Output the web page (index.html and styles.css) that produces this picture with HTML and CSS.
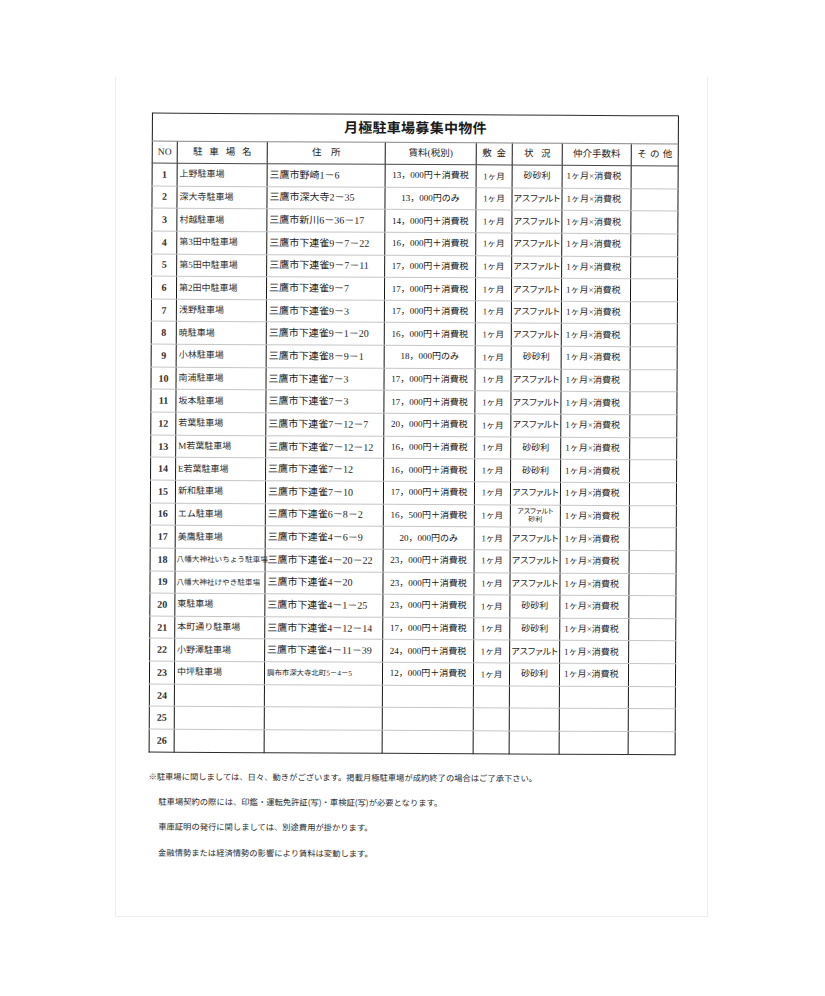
FILE: index.html
```html
<!DOCTYPE html>
<html lang="ja">
<head>
<meta charset="utf-8">
<title>月極駐車場募集中物件</title>
<link rel="stylesheet" href="styles.css">
</head>
<body>
<div class="sheet">
  <div class="content">
    <table class="list">
      <colgroup>
        <col class="c-no"><col class="c-name"><col class="c-addr"><col class="c-rent"><col class="c-dep"><col class="c-st"><col class="c-fee"><col class="c-etc">
      </colgroup>
      <thead>
        <tr class="title"><th colspan="8">月極駐車場募集中物件</th></tr>
        <tr class="head">
          <th>NO</th>
          <th><span class="sp-name">駐車場名</span></th>
          <th><span class="sp-addr">住所</span></th>
          <th>賃料(税別)</th>
          <th><span class="sp-two">敷金</span></th>
          <th><span class="sp-st">状況</span></th>
          <th class="h-fee">仲介手数料</th>
          <th><span class="sp-etc">その他</span></th>
        </tr>
      </thead>
      <tbody>
        <tr><td class="no">1</td><td class="name">上野駐車場</td><td class="addr">三鷹市野崎1－6</td><td class="rent">13，000円＋消費税</td><td class="dep">1ヶ月</td><td class="st">砂砂利</td><td class="fee">1ヶ月×消費税</td><td></td></tr>
        <tr><td class="no">2</td><td class="name">深大寺駐車場</td><td class="addr">三鷹市深大寺2－35</td><td class="rent">13，000円のみ</td><td class="dep">1ヶ月</td><td class="st">アスファルト</td><td class="fee">1ヶ月×消費税</td><td></td></tr>
        <tr><td class="no">3</td><td class="name">村越駐車場</td><td class="addr">三鷹市新川6－36－17</td><td class="rent">14，000円＋消費税</td><td class="dep">1ヶ月</td><td class="st">アスファルト</td><td class="fee">1ヶ月×消費税</td><td></td></tr>
        <tr><td class="no">4</td><td class="name">第3田中駐車場</td><td class="addr">三鷹市下連雀9－7－22</td><td class="rent">16，000円＋消費税</td><td class="dep">1ヶ月</td><td class="st">アスファルト</td><td class="fee">1ヶ月×消費税</td><td></td></tr>
        <tr><td class="no">5</td><td class="name">第5田中駐車場</td><td class="addr">三鷹市下連雀9－7－11</td><td class="rent">17，000円＋消費税</td><td class="dep">1ヶ月</td><td class="st">アスファルト</td><td class="fee">1ヶ月×消費税</td><td></td></tr>
        <tr><td class="no">6</td><td class="name">第2田中駐車場</td><td class="addr">三鷹市下連雀9－7</td><td class="rent">17，000円＋消費税</td><td class="dep">1ヶ月</td><td class="st">アスファルト</td><td class="fee">1ヶ月×消費税</td><td></td></tr>
        <tr><td class="no">7</td><td class="name">浅野駐車場</td><td class="addr">三鷹市下連雀9－3</td><td class="rent">17，000円＋消費税</td><td class="dep">1ヶ月</td><td class="st">アスファルト</td><td class="fee">1ヶ月×消費税</td><td></td></tr>
        <tr><td class="no">8</td><td class="name">暁駐車場</td><td class="addr">三鷹市下連雀9－1－20</td><td class="rent">16，000円＋消費税</td><td class="dep">1ヶ月</td><td class="st">アスファルト</td><td class="fee">1ヶ月×消費税</td><td></td></tr>
        <tr><td class="no">9</td><td class="name">小林駐車場</td><td class="addr">三鷹市下連雀8－9－1</td><td class="rent">18，000円のみ</td><td class="dep">1ヶ月</td><td class="st">砂砂利</td><td class="fee">1ヶ月×消費税</td><td></td></tr>
        <tr><td class="no">10</td><td class="name">南浦駐車場</td><td class="addr">三鷹市下連雀7－3</td><td class="rent">17，000円＋消費税</td><td class="dep">1ヶ月</td><td class="st">アスファルト</td><td class="fee">1ヶ月×消費税</td><td></td></tr>
        <tr><td class="no">11</td><td class="name">坂本駐車場</td><td class="addr">三鷹市下連雀7－3</td><td class="rent">17，000円＋消費税</td><td class="dep">1ヶ月</td><td class="st">アスファルト</td><td class="fee">1ヶ月×消費税</td><td></td></tr>
        <tr><td class="no">12</td><td class="name">若葉駐車場</td><td class="addr">三鷹市下連雀7－12－7</td><td class="rent">20，000円＋消費税</td><td class="dep">1ヶ月</td><td class="st">アスファルト</td><td class="fee">1ヶ月×消費税</td><td></td></tr>
        <tr><td class="no">13</td><td class="name">M若葉駐車場</td><td class="addr">三鷹市下連雀7－12－12</td><td class="rent">16，000円＋消費税</td><td class="dep">1ヶ月</td><td class="st">砂砂利</td><td class="fee">1ヶ月×消費税</td><td></td></tr>
        <tr><td class="no">14</td><td class="name">E若葉駐車場</td><td class="addr">三鷹市下連雀7－12</td><td class="rent">16，000円＋消費税</td><td class="dep">1ヶ月</td><td class="st">砂砂利</td><td class="fee">1ヶ月×消費税</td><td></td></tr>
        <tr><td class="no">15</td><td class="name">新和駐車場</td><td class="addr">三鷹市下連雀7－10</td><td class="rent">17，000円＋消費税</td><td class="dep">1ヶ月</td><td class="st">アスファルト</td><td class="fee">1ヶ月×消費税</td><td></td></tr>
        <tr><td class="no">16</td><td class="name">エム駐車場</td><td class="addr">三鷹市下連雀6－8－2</td><td class="rent">16，500円＋消費税</td><td class="dep">1ヶ月</td><td class="st"><span class="two-line">アスファルト<br>砂利</span></td><td class="fee">1ヶ月×消費税</td><td></td></tr>
        <tr><td class="no">17</td><td class="name">美鷹駐車場</td><td class="addr">三鷹市下連雀4－6－9</td><td class="rent">20，000円のみ</td><td class="dep">1ヶ月</td><td class="st">アスファルト</td><td class="fee">1ヶ月×消費税</td><td></td></tr>
        <tr><td class="no">18</td><td class="name small">八幡大神社いちょう駐車場</td><td class="addr">三鷹市下連雀4－20－22</td><td class="rent">23，000円＋消費税</td><td class="dep">1ヶ月</td><td class="st">アスファルト</td><td class="fee">1ヶ月×消費税</td><td></td></tr>
        <tr><td class="no">19</td><td class="name small">八幡大神社けやき駐車場</td><td class="addr">三鷹市下連雀4－20</td><td class="rent">23，000円＋消費税</td><td class="dep">1ヶ月</td><td class="st">アスファルト</td><td class="fee">1ヶ月×消費税</td><td></td></tr>
        <tr><td class="no">20</td><td class="name">東駐車場</td><td class="addr">三鷹市下連雀4－1－25</td><td class="rent">23，000円＋消費税</td><td class="dep">1ヶ月</td><td class="st">砂砂利</td><td class="fee">1ヶ月×消費税</td><td></td></tr>
        <tr><td class="no">21</td><td class="name">本町通り駐車場</td><td class="addr">三鷹市下連雀4－12－14</td><td class="rent">17，000円＋消費税</td><td class="dep">1ヶ月</td><td class="st">砂砂利</td><td class="fee">1ヶ月×消費税</td><td></td></tr>
        <tr><td class="no">22</td><td class="name">小野澤駐車場</td><td class="addr">三鷹市下連雀4－11－39</td><td class="rent">24，000円＋消費税</td><td class="dep">1ヶ月</td><td class="st">アスファルト</td><td class="fee">1ヶ月×消費税</td><td></td></tr>
        <tr><td class="no">23</td><td class="name">中坪駐車場</td><td class="addr small">調布市深大寺北町5－4－5</td><td class="rent">12，000円＋消費税</td><td class="dep">1ヶ月</td><td class="st">砂砂利</td><td class="fee">1ヶ月×消費税</td><td></td></tr>
        <tr><td class="no">24</td><td></td><td></td><td></td><td></td><td></td><td></td><td></td></tr>
        <tr><td class="no">25</td><td></td><td></td><td></td><td></td><td></td><td></td><td></td></tr>
        <tr><td class="no">26</td><td></td><td></td><td></td><td></td><td></td><td></td><td></td></tr>
      </tbody>
    </table>
    <div class="notes">
      <p class="first">※駐車場に関しましては、日々、動きがございます。掲載月極駐車場が成約終了の場合はご了承下さい。</p>
      <p>駐車場契約の際には、印鑑・運転免許証(写)・車検証(写)が必要となります。</p>
      <p>車庫証明の発行に関しましては、別途費用が掛かります。</p>
      <p>金融情勢または経済情勢の影響により賃料は変動します。</p>
    </div>
  </div>
</div>
</body>
</html>
```

FILE: styles.css
```css
html, body {
  margin: 0;
  padding: 0;
  background: #ffffff;
}

body {
  font-family: "Liberation Serif", "Noto Sans CJK JP", serif;
  color: #1e1e1e;
}

.sheet {
  box-sizing: border-box;
  width: 593px;
  height: 840px;
  margin: 77px 0 0 115px;
  border: 1px solid #efefef;
  border-top: none;
  padding: 37px 0 0 34px;
}

.content {
  width: 526px;
  transform: rotate(0.3deg);
  transform-origin: 265px 372px;
}

.list {
  width: 526px;
  border-collapse: collapse;
  table-layout: fixed;
  border: 1px solid #2e2e2e;
}

.c-no { width: 25px; }
.c-name { width: 90px; }
.c-addr { width: 118px; }
.c-rent { width: 91px; }
.c-dep { width: 36px; }
.c-st { width: 50px; }
.c-fee { width: 69px; }
.c-etc { width: 47px; }

.list th,
.list td {
  padding: 0;
  border-left: 1px solid #161616;
  border-right: 1px solid #161616;
  border-bottom: 1px solid #c6c6c6;
  white-space: nowrap;
  overflow: visible;
  vertical-align: middle;
  line-height: 1;
}

.title th {
  height: 27px;
  font-size: 14px;
  font-weight: 700;
  text-align: center;
  color: #1a1a1a;
  border-bottom: 1px solid #888888;
  letter-spacing: 0.02em;
}

.head th {
  height: 21px;
  font-size: 9.5px;
  font-weight: normal;
  text-align: center;
  color: #1e1e1e;
  border-bottom: 1px solid #4a4a4a;
}

.sp-name { letter-spacing: 0.72em; margin-right: -0.72em; }
.sp-addr { letter-spacing: 1em; margin-right: -1em; }
.sp-two { letter-spacing: 0.5em; margin-right: -0.5em; }
.sp-st { letter-spacing: 0.8em; margin-right: -0.8em; }
.sp-etc { letter-spacing: 0.35em; margin-right: -0.35em; }
.h-fee { font-size: 10px; }

.list tbody tr { height: 22.65px; }

.no {
  text-align: center;
  font-size: 10px;
  font-weight: 700;
  color: #2e2e2e;
}

.name {
  font-size: 9px;
  padding-left: 2px !important;
  color: #2e2e2e;
}

.name.small {
  font-size: 7.6px;
  padding-left: 1px !important;
}

.addr {
  font-size: 10px;
  padding-left: 2px !important;
  color: #1e1e1e;
}

.addr.small {
  font-size: 7.4px;
}

.rent {
  text-align: center;
  font-size: 9px;
  color: #141414;
}

.dep {
  text-align: center;
  font-size: 8.6px;
  color: #1e1e1e;
}

.st {
  text-align: center;
  font-size: 9px;
  font-feature-settings: "palt";
  color: #1e1e1e;
}

.two-line {
  display: inline-block;
  font-size: 7px;
  line-height: 8px;
}

.fee {
  font-size: 9px;
  padding-left: 4px !important;
  color: #1e1e1e;
}

.list tbody tr:last-child td {
  border-bottom: 1px solid #2e2e2e;
}

.notes {
  margin-top: 11px;
  font-family: "Noto Sans CJK JP", sans-serif;
  font-size: 8.3px;
  line-height: 25.3px;
  color: #2e2e2e;
}

.notes p {
  margin: 0;
  padding-left: 10px;
  white-space: nowrap;
}

.notes p.first {
  padding-left: 0;
}
```
